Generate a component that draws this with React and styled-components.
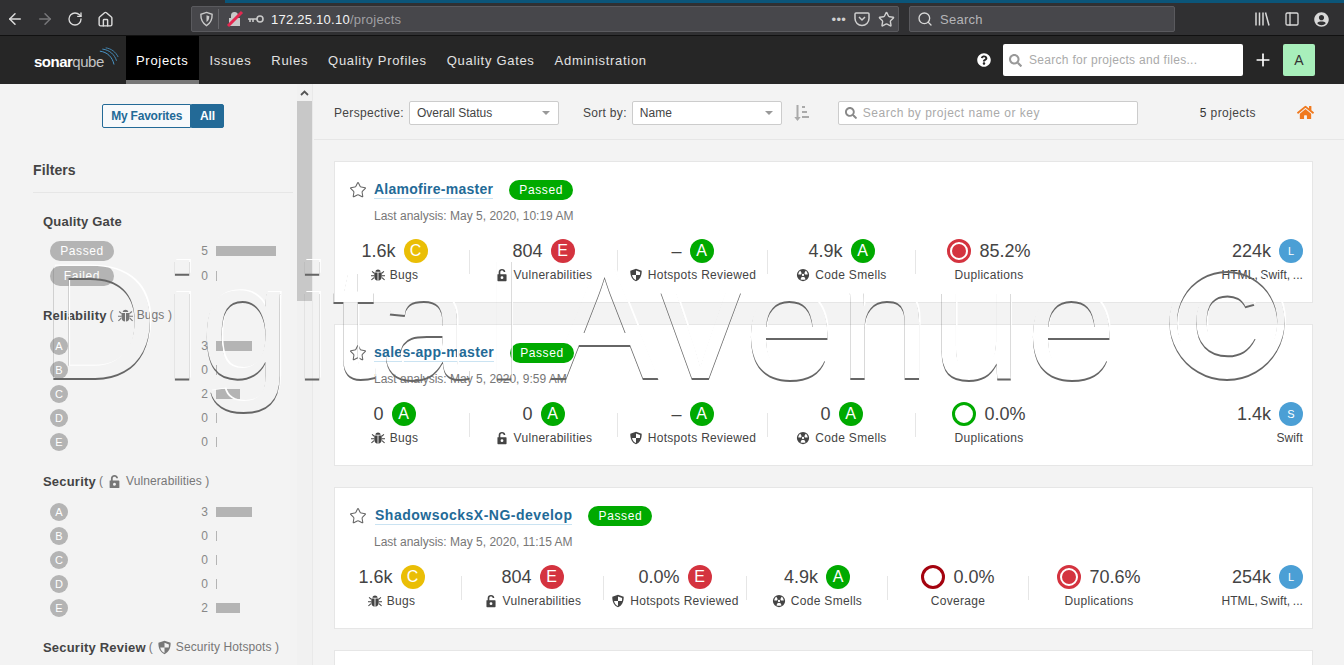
import React from 'react';
import styled, { createGlobalStyle } from 'styled-components';
import { ArrowLeft, ArrowRight, RotateCw, Home, Star, Search, Plus, PanelLeft } from 'lucide-react';
import { FaHome, FaSearch, FaQuestionCircle, FaUserCircle } from 'react-icons/fa';

const GlobalStyle = createGlobalStyle`
  html, body { margin: 0; padding: 0; background: #f3f3f3; }
  body { font-family: "Liberation Sans", Arial, sans-serif; font-size: 12px; color: #444; }
  * { box-sizing: border-box; }
`;

const Page = styled.div`
  position: relative;
  width: 1344px;
  height: 665px;
  overflow: hidden;
  display: flex;
  flex-direction: column;
`;

/* browser chrome */
const BrowserBar = styled.div`
  height: 36px;
  flex: none;
  display: flex;
  align-items: center;
  background: #303032;
  border-bottom: 1px solid #111;
  color: #d8d8d8;
  padding-top: 3px;
  background-image: linear-gradient(#0b5579, #0b5579);
  background-size: calc(100% - 225px) 3px;
  background-position: 225px 0;
  background-repeat: no-repeat;
`;

const ToolButton = styled.span`
  width: 30px;
  flex: none;
  display: flex;
  justify-content: center;
  color: ${p => (p.$dim ? '#77777a' : '#dcdcdc')};
`;

const UrlBox = styled.div`
  width: ${p => p.$width}px;
  margin-left: ${p => p.$left}px;
  height: 26px;
  flex: none;
  display: flex;
  align-items: center;
  background: #47474b;
  border: 1px solid #5a5a5e;
  border-radius: 2px;
  font-size: 13px;
  letter-spacing: 0.25px;
`;

const UrlDivider = styled.span`
  width: 1px;
  height: 20px;
  background: #66666a;
  margin: 0 7px 0 4px;
`;

const UrlText = styled.span`
  color: #f4f4f4;
  margin-left: 7px;
`;

const UrlPath = styled.span`
  color: #a0a0a3;
`;

const UrlEnd = styled.div`
  margin-left: auto;
  display: flex;
  align-items: center;
  gap: 8px;
  padding-right: 3px;
  color: #cfcfcf;
`;

const SearchHint = styled.span`
  color: #b5b5b8;
  margin-left: 7px;
`;

const BrowserEnd = styled.div`
  margin-left: auto;
  display: flex;
  align-items: center;
  gap: 14px;
  padding-right: 15px;
  color: #d8d8d8;
`;

/* sonarqube nav */
const Nav = styled.nav`
  height: 48px;
  flex: none;
  display: flex;
  align-items: stretch;
  background: #262626;
  padding-left: 34px;
`;

const Logo = styled.div`
  width: 92px;
  flex: none;
  display: flex;
  position: relative;
  align-items: center;
  color: #fff;
  font-size: 15px;
  letter-spacing: -0.5px;
  padding-top: 2px;

  b { font-weight: 700; }
  span { color: #c4c4c4; }
  svg { position: absolute; left: 65px; top: 11px; }
`;

const NavItem = styled.a`
  display: flex;
  align-items: center;
  padding: 0 10px;
  color: ${p => (p.$active ? '#fff' : '#e2e2e2')};
  background: ${p => (p.$active ? '#000' : 'transparent')};
  border-bottom: 4px solid ${p => (p.$active ? '#777' : 'transparent')};
  padding-top: 4px;
  font-size: 13px;
  letter-spacing: 0.7px;
  margin-right: ${p => (p.$active ? 1 : 0)}px;
`;

const NavEnd = styled.div`
  margin-left: auto;
  display: flex;
  align-items: center;
  padding-right: 29px;
  color: #fff;
`;

const NavSearch = styled.div`
  width: 240px;
  height: 32px;
  margin-left: 12px;
  display: flex;
  align-items: center;
  gap: 7px;
  padding-left: 6px;
  background: #fff;
  color: #aaa;
  font-size: 12px;
  letter-spacing: 0.3px;
  border-radius: 2px;
`;

const PlusButton = styled.span`
  display: flex;
  margin: 0 10px;
`;

const Avatar = styled.div`
  width: 32px;
  height: 32px;
  display: flex;
  align-items: center;
  justify-content: center;
  background: #a8efbb;
  color: #333;
  font-size: 14px;
  border-radius: 2px;
`;

/* page body */
const Body = styled.div`
  flex: 1;
  min-height: 0;
  display: flex;
`;

const Sidebar = styled.aside`
  width: 297px;
  flex: none;
  padding: 20px 4px 0 33px;
  background: #f3f3f3;
`;

const Scrollbar = styled.div`
  width: 15px;
  flex: none;
  background: #f1f1f1;
  display: flex;
  flex-direction: column;
  align-items: center;
  color: #555;
`;

const ScrollArrow = styled.div`
  height: 17px;
  display: flex;
  align-items: center;
`;

const ScrollThumb = styled.div`
  width: 15px;
  height: 200px;
  background: #c8c8c8;
`;

const Gutter = styled.div`
  width: 2px;
  flex: none;
  background: #e9e9e9;
  border-right: 1px solid #f3f3f3;
`;

const Toggle = styled.div`
  display: flex;
  justify-content: center;
`;

const ToggleOption = styled.span`
  height: 24px;
  padding: 0 8px;
  display: flex;
  align-items: center;
  font-weight: 700;
  font-size: 12px;
  letter-spacing: -0.2px;
  border: 1px solid #236a97;
  color: ${p => (p.$on ? '#fff' : '#236a97')};
  background: ${p => (p.$on ? '#236a97' : '#f7f9fb')};
  border-radius: ${p => (p.$on ? '0 2px 2px 0' : '2px 0 0 2px')};
`;

const FiltersHead = styled.h2`
  margin: 32px 0 0;
  font-size: 14px;
  line-height: 20px;
  font-weight: 700;
  color: #444;
  letter-spacing: 0.1px;
  padding-bottom: 12px;
  border-bottom: 1px solid #e6e6e6;
`;

const Facet = styled.section`
  margin-top: ${p => p.$top}px;
`;

const FacetTitle = styled.div`
  display: flex;
  align-items: center;
  height: 20px;
  margin-left: 10px;
  font-size: 13px;
  font-weight: 700;
  letter-spacing: 0.2px;
  color: #444;
  margin-bottom: ${p => p.$gap}px;
`;

const FacetNote = styled.span`
  display: flex;
  align-items: center;
  gap: 4px;
  margin-left: 3px;
  font-size: 12px;
  font-weight: 400;
  color: #777;
  letter-spacing: 0.1px;
`;

const GateRows = styled.div`
  display: flex;
  flex-direction: column;
  gap: 5px;
`;

const FacetRow = styled.div`
  display: grid;
  grid-template-columns: 142px 8px 60px;
  column-gap: 8px;
  align-items: center;
  margin-left: 17px;
  height: ${p => p.$h}px;
  color: #888;
  font-size: 12px;
`;

const FacetCount = styled.span`
  text-align: right;
  font-size: 12px;
  letter-spacing: 0.2px;
`;

const FacetBar = styled.span`
  display: block;
  height: 10px;
  background: #b4b4b4;
`;

const GatePill = styled.span`
  width: 64px;
  height: 20px;
  display: flex;
  align-items: center;
  justify-content: center;
  background: #b4b4b4;
  color: #fff;
  border-radius: 10px;
  letter-spacing: 0.6px;
  font-size: 12px;
`;

const GrayRating = styled.span`
  width: 18px;
  height: 18px;
  display: flex;
  align-items: center;
  justify-content: center;
  background: #b4b4b4;
  color: #fff;
  border-radius: 50%;
  font-size: 11px;
`;

/* main column */
const Main = styled.main`
  flex: 1;
  min-width: 0;
  overflow: hidden;
`;

const Toolbar = styled.div`
  height: 56px;
  display: flex;
  align-items: center;
  padding: 2px 30px 0 20px;
  border-bottom: 1px solid #e6e6e6;
  font-size: 12px;
  color: #444;
  letter-spacing: 0.32px;
`;

const SelectBox = styled.div`
  width: 150px;
  height: 24px;
  margin-left: 5px;
  margin-right: 24px;
  display: flex;
  align-items: center;
  justify-content: space-between;
  padding: 0 8px 0 7px;
  background: #fff;
  border: 1px solid #ccc;
  border-radius: 2px;
  letter-spacing: 0;
`;

const Caret = styled.span`
  width: 0;
  height: 0;
  border-left: 4px solid transparent;
  border-right: 4px solid transparent;
  border-top: 4px solid #999;
`;

const SortIcon = styled.span`
  display: flex;
  margin: 0 28px 0 -12px;
`;

const ProjectSearch = styled.div`
  width: 300px;
  height: 24px;
  display: flex;
  align-items: center;
  gap: 6px;
  padding-left: 6px;
  background: #fff;
  border: 1px solid #ccc;
  border-radius: 2px;
  color: #aaa;
  letter-spacing: 0.5px;
`;

const ProjectCount = styled.span`
  margin-left: 62px;
  letter-spacing: 0.4px;

  b { font-weight: 400; color: #333; }
`;

const HomeLink = styled.span`
  margin-left: auto;
  display: flex;
  color: #f0791e;
`;

const CardList = styled.div`
  display: flex;
  flex-direction: column;
  gap: 21px;
  padding: 21px 31px 0 20px;
`;

const Card = styled.article`
  height: 142px;
  flex: none;
  background: #fff;
  border: 1px solid #e6e6e6;
  padding: 18px 9px 0 15px;
`;

const CardHead = styled.header`
  height: 20px;
  display: flex;
  align-items: center;
  color: #666;
`;

const FavoriteStar = styled(Star)`
  flex: none;
  margin-left: -1px;
`;

const ProjectName = styled.a`
  margin-left: ${p => p.$left}px;
  font-size: 14px;
  font-weight: 700;
  color: #236a97;
  letter-spacing: ${p => p.$track}px;
  line-height: 17px;
  border-bottom: 1px solid #cae3f2;
`;

const PassedBadge = styled.span`
  width: 64px;
  height: 20px;
  margin-left: 16px;
  display: flex;
  align-items: center;
  justify-content: center;
  background: #00aa00;
  color: #fff;
  border-radius: 10px;
  letter-spacing: 0.6px;
`;

const Analysis = styled.div`
  margin: 7px 0 0 24px;
  line-height: 18px;
  color: #777;
`;

const Measures = styled.div`
  display: flex;
  align-items: flex-start;
  margin: 14px 0 0 ${p => p.$offset}px;
`;

const Measure = styled.div`
  width: ${p => p.$width}px;
  flex: none;
  display: flex;
  flex-direction: column;
  align-items: center;
`;

const MeasureSep = styled.span`
  width: 1px;
  height: 24px;
  flex: none;
  margin-top: 11px;
  background: #e6e6e6;
`;

const Languages = styled.div`
  margin-left: auto;
  display: flex;
  flex-direction: column;
  align-items: flex-end;
`;

const ValueRow = styled.div`
  height: 24px;
  display: flex;
  align-items: center;
  gap: 8px;
  font-size: 18px;
  color: #444;
`;

const Rating = styled.span`
  width: 24px;
  height: 24px;
  display: flex;
  align-items: center;
  justify-content: center;
  border-radius: 50%;
  background: ${p => p.$color};
  color: #fff;
  font-size: ${p => p.$size}px;
`;

const Ring = styled.span`
  width: 24px;
  height: 24px;
  display: flex;
  align-items: center;
  justify-content: center;
  border-radius: 50%;
  border: 3px solid ${p => p.$color};

  &::after {
    content: '';
    display: ${p => (p.$filled ? 'block' : 'none')};
    width: 14px;
    height: 14px;
    border-radius: 50%;
    background: ${p => p.$color};
  }
`;

const MeasureLabel = styled.div`
  height: 20px;
  margin-top: 2px;
  display: flex;
  align-items: center;
  gap: 5px;
  color: #444;
  letter-spacing: 0.3px;
  white-space: nowrap;
`;

const LanguageLabel = styled(MeasureLabel)`
  letter-spacing: 0.1px;
  word-spacing: -1px;
`;

const Watermark = styled.svg`
  position: absolute;
  left: 0;
  top: 0;
  pointer-events: none;

  text {
    font-family: "Liberation Sans", Arial, sans-serif;
    font-size: 163px;
  }
`;

/* small drawings */
const BugIcon = ({ size = 14, color = '#444' }) => (
  <svg width={size} height={size} viewBox="0 0 16 16" fill={color}>
    <path d="M5 4.2C5.3 2.6 6.500 1.800 8 1.800s2.700.8 3 2.400z" />
    <path d="M3.800 5.200h3.700v9.300C5.300 14.300 3.800 12.600 3.800 10.400zM8.500 5.200h3.700v5.200c0 2.200-1.500 3.900-3.700 4.100z" />
    <path d="M.8 4.200l.9-.9 2.500 2.400-.8.8zM15.200 4.200l-.9-.9-2.500 2.400.8.800zM0 8.200h3.900v1.100H0zM12.100 8.200H16v1.100h-3.900zM.9 14.100l-.9-.8 3-2.800.8.8zM15.100 14.100l.9-.8-3-2.800-.8.8z" />
  </svg>
);

const LockIcon = ({ size = 14, color = '#444' }) => (
  <svg width={size} height={size} viewBox="0 0 16 16" fill={color}>
    <path fillRule="evenodd" d="M3 7h1.200V4.600C4.200 2.400 5.800 1 8 1s3.700 1.400 3.800 3.500H9.900C9.800 3.400 9.100 2.800 8 2.800S6.100 3.400 6.100 4.600V7H12.500c.4 0 .7.300.7.700v6.600c0 .4-.3.7-.7.700H3.500c-.4 0-.7-.3-.7-.7V7.700C2.800 7.300 2.800 7 3 7zM8 9.400a1.600 1.600 0 100 3.200 1.600 1.600 0 000-3.200z" />
  </svg>
);

const ShieldIcon = ({ size = 14, color = '#444' }) => (
  <svg width={size} height={size} viewBox="0 0 16 16" fill={color}>
    <path fillRule="evenodd" d="M8 .8l6.500 2.200c.2 5.800-1.900 10-6.500 12.200C3.400 13 1.300 8.800 1.500 3zM8 2.900v5H3.500c.4 2.600 1.900 4.600 4.500 5.900V7.900h4.500c.1-.9.200-1.900.2-3.200z" />
  </svg>
);

const SmellIcon = ({ size = 14, color = '#444' }) => (
  <svg width={size} height={size} viewBox="0 0 16 16" fill={color}>
    <path fillRule="evenodd" d="M8 1a7 7 0 110 14A7 7 0 018 1zM8 6.700a1.300 1.300 0 100 2.600 1.300 1.300 0 000-2.600zM5 3.200C3.700 4 2.800 5.400 2.600 7.300h3.200c.1-.6.300-1 .7-1.400zM11 3.200L9.500 5.900c.4.400.6.800.7 1.400h3.200c-.2-1.900-1.100-3.300-2.400-4.100zM6.600 10.100l-1.600 2.700c1.800 1 4.200 1 6 0l-1.600-2.700c-.8.400-2 .4-2.800 0z" />
  </svg>
);

const SortGlyph = () => (
  <svg width="16" height="18" viewBox="0 0 16 18" fill="#aaa">
    <path d="M2.500 1h2v12h2.200l-3.200 4-3.200-4h2.200z" />
    <path d="M8 2h3v2H8zM8 7h5v2H8zM8 12h7v2H8z" />
  </svg>
);

const SonarArcs = () => (
  <svg width="20" height="20" viewBox="0 0 24 24" fill="none" stroke="#4b9fd5">
    <path d="M1 5c9 1 15 7 17 16" strokeWidth="1.100" />
    <path d="M4 2.500c9 1 15 7 17 14" strokeWidth="1" />
    <path d="M8 1c7 1 12 5 15 11" strokeWidth="0.900" />
  </svg>
);

const TrackingShield = () => (
  <svg width="15" height="16" viewBox="0 0 16 16" fill="none" stroke="#c9c9c9" strokeWidth="1.500">
    <path d="M8 1l6 2c.2 5.500-1.800 9.500-6 12C3.800 12.500 1.800 8.500 2 3z" />
    <path d="M8 4l3 1c0 3-.9 4.800-3 6.300z" fill="#c9c9c9" stroke="none" />
  </svg>
);

const InsecureLock = () => (
  <svg width="18" height="18" viewBox="0 0 18 18">
    <path d="M5 8V5.500a3.500 3.500 0 017 0V8h2v8H3V8z" fill="#c8c8c8" />
    <path d="M2 16L16 2" stroke="#e22850" strokeWidth="3" />
  </svg>
);

const KeyIcon = () => (
  <svg width="17" height="10" viewBox="0 0 17 10" fill="none" stroke="#c9c9c9" strokeWidth="1.600">
    <circle cx="13" cy="5" r="3" />
    <path d="M10 5H1M3 5v3M6 5v3" />
  </svg>
);

const PocketIcon = () => (
  <svg width="16" height="16" viewBox="0 0 16 16" fill="none" stroke="#cfcfcf" strokeWidth="1.500">
    <path d="M2 2h12c.5 0 1 .4 1 1v4.500a7 7 0 01-14 0V3c0-.6.500-1 1-1z" />
    <path d="M5 6l3 3 3-3" />
  </svg>
);

const LibraryIcon = () => (
  <svg width="16" height="16" viewBox="0 0 16 16" fill="none" stroke="#d8d8d8" strokeWidth="1.500">
    <path d="M2 1.500v13M5.500 1.500v13M9 1.500v13M11.500 1.500l3.500 13" />
  </svg>
);

const GRADE = {
  A: '#00aa00',
  C: '#eabe06',
  E: '#d4333f',
};

const LABELS = {
  bugs: { text: 'Bugs', Icon: BugIcon },
  vuln: { text: 'Vulnerabilities', Icon: LockIcon },
  hot: { text: 'Hotspots Reviewed', Icon: ShieldIcon },
  smell: { text: 'Code Smells', Icon: SmellIcon },
};

const projects = [
  {
    name: 'Alamofire-master',
    nameLeft: 7,
    track: 0.25,
    date: 'May 5, 2020, 10:19 AM',
    offset: -30,
    measures: [
      { w: 149, kind: 'bugs', value: '1.6k', grade: 'C' },
      { w: 147, kind: 'vuln', value: '804', grade: 'E' },
      { w: 149, kind: 'hot', value: '–', grade: 'A' },
      { w: 147, kind: 'smell', value: '4.9k', grade: 'A' },
      { w: 146, label: 'Duplications', value: '85.2%', ring: '#d4333f', filled: true },
    ],
    lang: { value: '224k', letter: 'L', label: 'HTML, Swift, ...' },
  },
  {
    name: 'sales-app-master',
    nameLeft: 7,
    track: 0.3,
    date: 'May 5, 2020, 9:59 AM',
    offset: -30,
    measures: [
      { w: 149, kind: 'bugs', value: '0', grade: 'A' },
      { w: 147, kind: 'vuln', value: '0', grade: 'A' },
      { w: 149, kind: 'hot', value: '–', grade: 'A' },
      { w: 147, kind: 'smell', value: '0', grade: 'A' },
      { w: 146, label: 'Duplications', value: '0.0%', ring: '#00aa00' },
    ],
    lang: { value: '1.4k', letter: 'S', label: 'Swift' },
  },
  {
    name: 'ShadowsocksX-NG-develop',
    nameLeft: 8,
    track: 0.5,
    date: 'May 5, 2020, 11:15 AM',
    offset: -28,
    measures: [
      { w: 139, kind: 'bugs', value: '1.6k', grade: 'C' },
      { w: 141, kind: 'vuln', value: '804', grade: 'E' },
      { w: 142, kind: 'hot', value: '0.0%', grade: 'E' },
      { w: 140, kind: 'smell', value: '4.9k', grade: 'A' },
      { w: 140, label: 'Coverage', value: '0.0%', ring: '#a4030f' },
      { w: 140, label: 'Duplications', value: '70.6%', ring: '#d4333f', filled: true },
    ],
    lang: { value: '254k', letter: 'L', label: 'HTML, Swift, ...' },
  },
];

const ratingFacets = [
  {
    title: 'Reliability',
    note: 'Bugs',
    Icon: BugIcon,
    top: 19,
    counts: [3, 0, 2, 0, 0],
  },
  {
    title: 'Security',
    note: 'Vulnerabilities',
    Icon: LockIcon,
    top: 17,
    counts: [3, 0, 0, 0, 2],
  },
];

const WATERMARK_X = '40 164 200 294 331 379 486 550 660 744 839 931 1026 1167';

const CountBar = ({ n }) => <FacetBar style={{ width: n ? n * 12 : 1 }} />;

const MeasureCell = ({ m }) => {
  const label = m.kind ? LABELS[m.kind] : { text: m.label };
  return (
    <Measure $width={m.w}>
      <ValueRow>
        {m.ring && <Ring $color={m.ring} $filled={m.filled} />}
        {m.value}
        {m.grade && <Rating $color={GRADE[m.grade]} $size={16}>{m.grade}</Rating>}
      </ValueRow>
      <MeasureLabel>
        {label.Icon && <label.Icon />}
        {label.text}
      </MeasureLabel>
    </Measure>
  );
};

const ProjectCard = ({ project }) => (
  <Card>
    <CardHead>
      <FavoriteStar size={18} strokeWidth={1.4} />
      <ProjectName $left={project.nameLeft} $track={project.track}>{project.name}</ProjectName>
      <PassedBadge>Passed</PassedBadge>
    </CardHead>
    <Analysis>Last analysis: {project.date}</Analysis>
    <Measures $offset={project.offset}>
      {project.measures.map((m, i) => (
        <React.Fragment key={i}>
          <MeasureCell m={m} />
          {i < project.measures.length - 1 && <MeasureSep />}
        </React.Fragment>
      ))}
      <Languages>
        <ValueRow>
          {project.lang.value}
          <Rating $color="#4b9fd5" $size={11}>{project.lang.letter}</Rating>
        </ValueRow>
        <LanguageLabel>{project.lang.label}</LanguageLabel>
      </Languages>
    </Measures>
  </Card>
);

export default function App() {
  return (
    <Page>
      <GlobalStyle />
      <BrowserBar>
        <ToolButton><ArrowLeft size={18} /></ToolButton>
        <ToolButton $dim><ArrowRight size={18} /></ToolButton>
        <ToolButton><RotateCw size={16} /></ToolButton>
        <ToolButton><Home size={17} /></ToolButton>
        <UrlBox $width={708} $left={71}>
          <span style={{ width: 7 }} />
          <TrackingShield />
          <UrlDivider />
          <InsecureLock />
          <span style={{ width: 3 }} />
          <KeyIcon />
          <UrlText>172.25.10.10<UrlPath>/projects</UrlPath></UrlText>
          <UrlEnd>
            <span>•••</span>
            <PocketIcon />
            <Star size={17} />
          </UrlEnd>
        </UrlBox>
        <UrlBox $width={266} $left={10}>
          <span style={{ width: 7 }} />
          <Search size={16} />
          <SearchHint>Search</SearchHint>
        </UrlBox>
        <BrowserEnd>
          <LibraryIcon />
          <PanelLeft size={16} />
          <FaUserCircle size={15} />
        </BrowserEnd>
      </BrowserBar>

      <Nav>
        <Logo>
          <b>sonar</b><span>qube</span>
          <SonarArcs />
        </Logo>
        <NavItem $active>Projects</NavItem>
        <NavItem>Issues</NavItem>
        <NavItem>Rules</NavItem>
        <NavItem>Quality Profiles</NavItem>
        <NavItem>Quality Gates</NavItem>
        <NavItem>Administration</NavItem>
        <NavEnd>
          <FaQuestionCircle size={14} />
          <NavSearch>
            <FaSearch size={13} color="#999" />
            Search for projects and files...
          </NavSearch>
          <PlusButton><Plus size={20} /></PlusButton>
          <Avatar>A</Avatar>
        </NavEnd>
      </Nav>

      <Body>
        <Sidebar>
          <Toggle>
            <ToggleOption>My Favorites</ToggleOption>
            <ToggleOption $on>All</ToggleOption>
          </Toggle>
          <FiltersHead>Filters</FiltersHead>
          <Facet $top={18}>
            <FacetTitle $gap={10}>Quality Gate</FacetTitle>
            <GateRows>
              <FacetRow $h={20}>
                <GatePill>Passed</GatePill>
                <FacetCount>5</FacetCount>
                <CountBar n={5} />
              </FacetRow>
              <FacetRow $h={20}>
                <GatePill>Failed</GatePill>
                <FacetCount>0</FacetCount>
                <CountBar n={0} />
              </FacetRow>
            </GateRows>
          </Facet>
          {ratingFacets.map(facet => (
            <Facet key={facet.title} $top={facet.top}>
              <FacetTitle $gap={8}>
                {facet.title}
                <FacetNote>( <facet.Icon size={15} color="#777" /> {facet.note} )</FacetNote>
              </FacetTitle>
              {facet.counts.map((n, i) => (
                <FacetRow key={i} $h={i === 0 ? 25 : 24}>
                  <GrayRating>{'ABCDE'[i]}</GrayRating>
                  <FacetCount>{n}</FacetCount>
                  <CountBar n={n} />
                </FacetRow>
              ))}
            </Facet>
          ))}
          <Facet $top={17}>
            <FacetTitle $gap={0}>
              Security Review
              <FacetNote>( <ShieldIcon size={15} color="#777" /> Security Hotspots )</FacetNote>
            </FacetTitle>
          </Facet>
        </Sidebar>
        <Scrollbar>
          <ScrollArrow>
            <svg width="9" height="6" viewBox="0 0 9 6" fill="none" stroke="#555" strokeWidth="1.800"><path d="M1 5l3.500-3.500L8 5" /></svg>
          </ScrollArrow>
          <ScrollThumb />
        </Scrollbar>
        <Gutter />
        <Main>
          <Toolbar>
            Perspective:
            <SelectBox>Overall Status<Caret /></SelectBox>
            Sort by:
            <SelectBox>Name<Caret /></SelectBox>
            <SortIcon><SortGlyph /></SortIcon>
            <ProjectSearch>
              <FaSearch size={12} color="#888" />
              Search by project name or key
            </ProjectSearch>
            <ProjectCount><b>5</b> projects</ProjectCount>
            <HomeLink><FaHome size={17} /></HomeLink>
          </Toolbar>
          <CardList>
            {projects.map(p => <ProjectCard key={p.name} project={p} />)}
            <Card />
          </CardList>
        </Main>
      </Body>

      <Watermark width="1344" height="665" viewBox="0 0 1344 665">
        <defs>
          <mask id="outside" maskUnits="userSpaceOnUse" x="0" y="0" width="1344" height="665">
            <rect width="1344" height="665" fill="#fff" />
            <text x={WATERMARK_X} y="378" fill="#000">DigitalAvenue©</text>
          </mask>
        </defs>
        <g mask="url(#outside)">
          <text x={WATERMARK_X} y="376.500" fill="#fff" transform="translate(1.500 0)">DigitalAvenue©</text>
          <text x={WATERMARK_X} y="379.500" fill="#666">DigitalAvenue©</text>
        </g>
      </Watermark>
    </Page>
  );
}
